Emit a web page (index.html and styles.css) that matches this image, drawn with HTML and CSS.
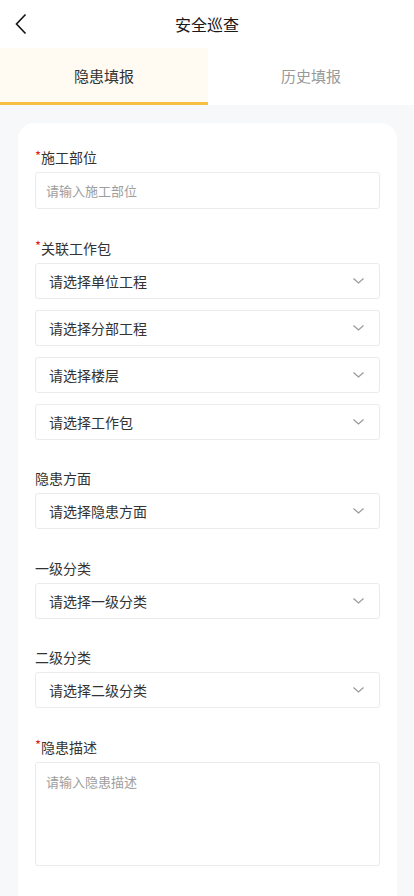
FILE: index.html
```html
<!DOCTYPE html>
<html lang="zh-CN">
<head>
  <meta charset="UTF-8">
  <title>安全巡查</title>
  <link rel="stylesheet" href="styles.css">
</head>
<body>

<div class="navbar">
  <span class="back">
    <svg width="12" height="22" viewBox="0 0 12 22"><path d="M10.5 1.5 L1.5 11 L10.5 20.5" fill="none" stroke="#111" stroke-width="1.6"/></svg>
  </span>
  <span class="title">安全巡查</span>
</div>

<div class="tabs">
  <div class="tab active">隐患填报</div>
  <div class="tab">历史填报</div>
</div>

<div class="page">
  <div class="card">
    <div class="field first">
      <label><span class="req">*</span>施工部位</label>
      <input type="text" class="input" placeholder="请输入施工部位">
    </div>

    <div class="field">
      <label><span class="req">*</span>关联工作包</label>
      <div class="select-list">
        <div class="select"><span>请选择单位工程</span><svg class="arrow" width="11" height="6" viewBox="0 0 11 6"><path d="M0.5 0.5 L5.5 5 L10.5 0.5" fill="none" stroke="#999" stroke-width="1.2"/></svg></div>
        <div class="select"><span>请选择分部工程</span><svg class="arrow" width="11" height="6" viewBox="0 0 11 6"><path d="M0.5 0.5 L5.5 5 L10.5 0.5" fill="none" stroke="#999" stroke-width="1.2"/></svg></div>
        <div class="select"><span>请选择楼层</span><svg class="arrow" width="11" height="6" viewBox="0 0 11 6"><path d="M0.5 0.5 L5.5 5 L10.5 0.5" fill="none" stroke="#999" stroke-width="1.2"/></svg></div>
        <div class="select"><span>请选择工作包</span><svg class="arrow" width="11" height="6" viewBox="0 0 11 6"><path d="M0.5 0.5 L5.5 5 L10.5 0.5" fill="none" stroke="#999" stroke-width="1.2"/></svg></div>
      </div>
    </div>

    <div class="field">
      <label>隐患方面</label>
      <div class="select"><span>请选择隐患方面</span><svg class="arrow" width="11" height="6" viewBox="0 0 11 6"><path d="M0.5 0.5 L5.5 5 L10.5 0.5" fill="none" stroke="#999" stroke-width="1.2"/></svg></div>
    </div>

    <div class="field">
      <label>一级分类</label>
      <div class="select"><span>请选择一级分类</span><svg class="arrow" width="11" height="6" viewBox="0 0 11 6"><path d="M0.5 0.5 L5.5 5 L10.5 0.5" fill="none" stroke="#999" stroke-width="1.2"/></svg></div>
    </div>

    <div class="field">
      <label>二级分类</label>
      <div class="select"><span>请选择二级分类</span><svg class="arrow" width="11" height="6" viewBox="0 0 11 6"><path d="M0.5 0.5 L5.5 5 L10.5 0.5" fill="none" stroke="#999" stroke-width="1.2"/></svg></div>
    </div>

    <div class="field">
      <label><span class="req">*</span>隐患描述</label>
      <textarea class="textarea" placeholder="请输入隐患描述"></textarea>
    </div>
  </div>
</div>

</body>
</html>
```

FILE: styles.css
```css
* {
  box-sizing: border-box;
  font-family: "Noto Sans CJK SC", "Noto Sans", sans-serif;
}

body {
  margin: 0;
  background: #f7f8fa;
  color: #333;
}

.navbar {
  height: 48px;
  background: #fff;
  display: flex;
  align-items: center;
  justify-content: center;
  position: relative;
}

.back {
  position: absolute;
  left: 15px;
  top: 13px;
  display: flex;
}

.title {
  font-size: 16px;
  color: #1a1a1a;
  line-height: 20px;
}

.tabs {
  display: flex;
  background: #fff;
  height: 57px;
}

.tab {
  flex: 1;
  display: flex;
  align-items: center;
  justify-content: center;
  font-size: 15px;
  color: #999;
  padding-bottom: 3px;
}

.tab.active {
  flex: 0 0 208px;
  background: #fffaf2;
  color: #333;
  border-bottom: 3px solid #f6c142;
  padding-bottom: 0;
}

.page {
  padding-top: 18px;
}

.card {
  background: #fff;
  margin: 0 17px 0 18px;
  border-radius: 16px;
  padding: 24px 17px 60px;
}

.field {
  margin-top: 28.5px;
}

.field.first {
  margin-top: 0;
}

label {
  display: flex;
  align-items: center;
  height: 20px;
  font-size: 14px;
  line-height: 20px;
  margin-bottom: 5px;
  color: #333;
}

.req {
  color: #e0201f;
  font-size: 13px;
  line-height: 1;
  margin-top: -4px;
}

.input {
  display: block;
  width: 100%;
  height: 37px;
  border: 1px solid #ebebeb;
  border-radius: 3px;
  padding: 0 10px;
  font-size: 13px;
  color: #333;
  outline: none;
}

.input::placeholder,
.textarea::placeholder {
  color: #9e9e9e;
}

.select-list {
  display: flex;
  flex-direction: column;
  gap: 11px;
}

.select {
  height: 36px;
  border: 1px solid #ebebeb;
  border-radius: 3px;
  display: flex;
  align-items: center;
  justify-content: space-between;
  padding: 0 15px 0 13px;
  font-size: 14px;
  color: #333;
}

.arrow {
  display: block;
}

.textarea {
  display: block;
  width: 100%;
  height: 104px;
  border: 1px solid #ebebeb;
  border-radius: 3px;
  padding: 9px 10px;
  font-size: 13px;
  line-height: 20px;
  resize: none;
  outline: none;
}
```
